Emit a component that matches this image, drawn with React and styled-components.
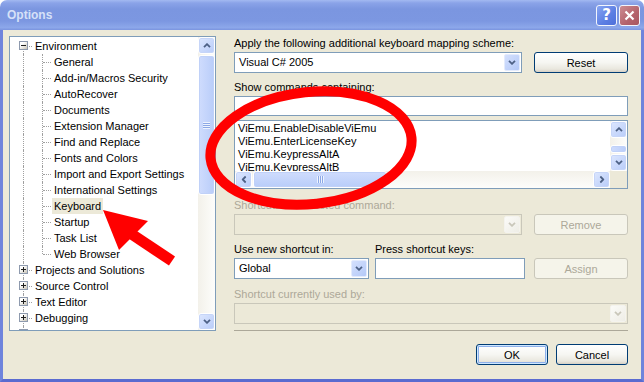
import React from 'react'
import styled, { createGlobalStyle } from 'styled-components'

const GlobalStyle = createGlobalStyle`
  html, body { margin: 0; padding: 0; background: #fff; overflow: hidden; }
  * { box-sizing: border-box; }
`

const Window = styled.div`
  position: relative;
  width: 644px;
  height: 382px;
  display: flex;
  flex-direction: column;
  font-family: "Liberation Sans", Arial, sans-serif;
  font-size: 11px;
  color: #000;
`

const TitleBar = styled.div`
  height: 30px;
  flex: none;
  display: flex;
  align-items: center;
  padding: 0 4px 0 7px;
  border-radius: 7px 7px 0 0;
  background: linear-gradient(#A3B9F1 0, #8AA3E8 10%, #7B96E0 30%, #7C97E1 70%, #8CA7EA 92%, #7A94DF 100%);
`

const Title = styled.div`
  flex: 1;
  color: #D6E1F8;
  font-weight: bold;
  font-size: 12px;
  padding-bottom: 1px;
`

const CaptionButton = styled.div`
  width: 21px;
  height: 21px;
  margin-left: 2px;
  border: 1px solid #F2F5FD;
  border-radius: 3px;
  display: flex;
  align-items: center;
  justify-content: center;
  color: #fff;
  font-family: "DejaVu Sans", sans-serif;
  font-size: 15px;
  font-weight: bold;
  background: ${p => p.$close
    ? 'linear-gradient(135deg, #CC8C92, #B4636C 60%, #A85761)'
    : 'linear-gradient(135deg, #87A5F2, #5B7EE3 60%, #4F70DA)'};
`

const Frame = styled.div`
  flex: 1;
  display: flex;
  flex-direction: column;
  background: #ECE9D8;
  border: 3px solid #6F84DC;
  border-top: 0;
  border-bottom-color: #5A6BD0;
  padding: 6px 13px 0 6px;
`

const Main = styled.div`
  display: flex;
  height: 295px;
`

/* ---------- tree ---------- */

const TreeBox = styled.div`
  width: 207px;
  height: 295px;
  flex: none;
  background: #fff;
  border: 1px solid #7F9DB9;
  display: flex;
`

const TreeList = styled.div`
  flex: 1;
  overflow: hidden;
  padding: 1px 0 0 4px;
`

const Row = styled.div`
  display: flex;
  height: 16px;
  align-items: center;
`

const Gutter = styled.div`
  position: relative;
  width: 19px;
  height: 16px;
  flex: none;

  &::before {
    content: '';
    display: ${p => (p.$up || p.$down ? 'block' : 'none')};
    position: absolute;
    left: 9px;
    top: ${p => (p.$up ? '0' : '8px')};
    bottom: ${p => (p.$down ? '0' : '8px')};
    border-left: 1px dotted #A0A0A0;
  }

  &::after {
    content: '';
    display: ${p => (p.$stub ? 'block' : 'none')};
    position: absolute;
    left: 10px;
    right: 1px;
    top: 8px;
    border-top: 1px dotted #A0A0A0;
  }
`

const Expander = styled.span`
  position: absolute;
  z-index: 1;
  left: 5px;
  top: 3px;
  width: 9px;
  height: 9px;
  border: 1px solid #8E9AAE;
  background: linear-gradient(135deg, #fff 30%, #C9C4B6);

  &::before {
    content: '';
    position: absolute;
    left: 1px;
    top: 3px;
    width: 5px;
    height: 1px;
    background: #1E1E1E;
  }

  &::after {
    content: '';
    display: ${p => (p.$plus ? 'block' : 'none')};
    position: absolute;
    left: 3px;
    top: 1px;
    width: 1px;
    height: 5px;
    background: #1E1E1E;
  }
`

const NodeLabel = styled.span`
  white-space: nowrap;
  line-height: 16px;
  padding: 0 2px;
  background: ${p => (p.$selected ? '#ECE9D8' : 'transparent')};
`

/* ---------- scrollbars ---------- */

const VScroll = styled.div`
  width: 17px;
  flex: none;
  display: flex;
  flex-direction: column;
  background: linear-gradient(to right, #F3F1EA, #FDFDFB);
`

const HScroll = styled.div`
  height: 17px;
  display: flex;
  background: linear-gradient(#F3F1EA, #FDFDFB);
`

const ScrollBtn = styled.div`
  width: 17px;
  height: 17px;
  flex: none;
  border: 1px solid #fff;
  border-radius: 3px;
  background: linear-gradient(135deg, #DDE7FE, #B8CCF9);
  box-shadow: inset 0 0 0 1px #C6D5F8;
  display: flex;
  align-items: center;
  justify-content: center;

  svg { transform: rotate(${p => p.$rot || 0}deg); }
`

const Track = styled.div`
  flex: 1;
  display: flex;
  flex-direction: ${p => (p.$horizontal ? 'row' : 'column')};
`

const Thumb = styled.div`
  flex: none;
  width: ${p => (p.$horizontal ? `${p.$size}px` : '100%')};
  height: ${p => (p.$horizontal ? '100%' : `${p.$size}px`)};
  margin: ${p => (p.$horizontal ? `0 0 0 ${p.$offset}px` : `${p.$offset}px 0 0`)};
  border: 1px solid #fff;
  border-radius: 3px;
  background: ${p => (p.$horizontal
    ? 'linear-gradient(#CFDCFD, #B9CDF9)'
    : 'linear-gradient(to right, #CFDCFD, #B9CDF9)')};
  box-shadow: inset 0 0 0 1px #C0D1F8;
  display: flex;
  align-items: center;
  justify-content: center;
`

const Grip = styled.div`
  width: 7px;
  height: 7px;
  background: ${p => (p.$horizontal
    ? 'repeating-linear-gradient(to right, #EEF4FE 0 1px, #8CA8E6 1px 2px)'
    : 'repeating-linear-gradient(#EEF4FE 0 1px, #8CA8E6 1px 2px)')};
`

const Chevron = ({ color = '#4D6185' }) => (
  <svg width="8" height="5" viewBox="0 0 8 5">
    <path d="M1 4.2 L4 1.2 L7 4.2" fill="none" stroke={color} strokeWidth="1.8" />
  </svg>
)

/* ---------- right pane ---------- */

const RightPane = styled.div`
  flex: 1;
  margin-left: 18px;
  display: flex;
  flex-direction: column;
  border-bottom: 1px solid #ACA899;
`

const Label = styled.div`
  line-height: 13px;
  height: 13px;
  margin-top: ${p => p.$top || 0}px;
  margin-bottom: 2px;
  white-space: nowrap;
  color: ${p => (p.$disabled ? '#ACA899' : '#000')};
`

const ControlRow = styled.div`
  display: flex;
  align-items: flex-end;
  gap: ${p => p.$gap || 12}px;
`

const Field = styled.div`
  display: flex;
  flex-direction: column;
  width: ${p => p.$width}px;
  flex: none;
`

const Combo = styled.div`
  height: 21px;
  flex: 1;
  border: 1px solid ${p => (p.$disabled ? '#C9C7BA' : '#7F9DB9')};
  background: ${p => (p.$disabled ? '#ECE9D8' : '#fff')};
  display: flex;
  align-items: stretch;
  padding: 1px;
`

const ComboText = styled.div`
  flex: 1;
  padding-left: 3px;
  line-height: 17px;
`

const DropBtn = styled.div`
  width: 16px;
  flex: none;
  border-radius: 2px;
  border: 1px solid ${p => (p.$disabled ? '#F4F3EE' : '#E3EBFD')};
  background: ${p => (p.$disabled
    ? 'linear-gradient(135deg, #FBFBF8, #EEEDE6)'
    : 'linear-gradient(135deg, #D4E0FD, #B4C9F8)')};
  display: flex;
  align-items: center;
  justify-content: center;

  svg { transform: rotate(180deg); }
`

const TextBox = styled.div`
  height: ${p => p.$height || 20}px;
  flex: none;
  border: 1px solid #7F9DB9;
  background: #fff;
`

const ListBox = styled.div`
  height: 69px;
  margin-top: 4px;
  border: 1px solid #7F9DB9;
  background: #fff;
  display: grid;
  grid-template-columns: 1fr 17px;
  grid-template-rows: 1fr 17px;
  overflow: hidden;
`

const ListItems = styled.div`
  padding: 1px 0 0 3px;
  overflow: hidden;
  line-height: 13px;
  white-space: nowrap;
`

const Corner = styled.div`
  background: #ECE9D8;
`

const Button = styled.div`
  width: ${p => p.$width || 94}px;
  height: 21px;
  flex: none;
  margin-left: ${p => (p.$push ? 'auto' : '0')};
  border: 1px solid ${p => (p.$disabled ? '#C9C7BA' : '#003C74')};
  border-radius: 3px;
  background: ${p => (p.$disabled
    ? '#F5F4EA'
    : 'linear-gradient(#FFFFFF 0, #F6F6F2 50%, #E9E7DE 85%, #D6D0C5 100%)')};
  color: ${p => (p.$disabled ? '#ACA899' : '#000')};
  box-shadow: ${p => (p.$default ? 'inset 0 0 0 1px #CEE7FF, inset 0 0 0 2px #8EB0EA' : 'none')};
  display: flex;
  align-items: center;
  justify-content: center;
`

const Footer = styled.div`
  display: flex;
  justify-content: flex-end;
  gap: 8px;
  padding-top: 13px;
`

const Annotation = styled.svg`
  position: absolute;
  left: 0;
  top: 0;
  pointer-events: none;
`

const envChildren = [
  'General', 'Add-in/Macros Security', 'AutoRecover', 'Documents', 'Extension Manager',
  'Find and Replace', 'Fonts and Colors', 'Import and Export Settings', 'International Settings',
  'Keyboard', 'Startup', 'Task List', 'Web Browser',
]
const otherRoots = ['Projects and Solutions', 'Source Control', 'Text Editor', 'Debugging', 'Device Tools']
const commands = ['ViEmu.EnableDisableViEmu', 'ViEmu.EnterLicenseKey', 'ViEmu.KeypressAltA', 'ViEmu.KeypressAltB']

const RootRow = ({ label, first, open }) => (
  <Row>
    <Gutter $up={!first} $down $stub>
      <Expander $plus={!open} />
    </Gutter>
    <NodeLabel>{label}</NodeLabel>
  </Row>
)

const ChildRow = ({ label, last, selected }) => (
  <Row>
    <Gutter $up $down />
    <Gutter $up $down={!last} $stub />
    <NodeLabel $selected={selected}>{label}</NodeLabel>
  </Row>
)

const App = () => {
  return (
    <Window>
      <GlobalStyle />
      <TitleBar>
        <Title>Options</Title>
        <CaptionButton>?</CaptionButton>
        <CaptionButton $close>
          <svg width="11" height="11" viewBox="0 0 11 11">
            <path d="M1.5 1.5 L9.5 9.5 M9.5 1.5 L1.5 9.5" stroke="#fff" strokeWidth="2.2" />
          </svg>
        </CaptionButton>
      </TitleBar>

      <Frame>
        <Main>
          <TreeBox>
            <TreeList>
              <RootRow label="Environment" first open />
              {envChildren.map((c, i) => (
                <ChildRow key={c} label={c} last={i === envChildren.length - 1} selected={c === 'Keyboard'} />
              ))}
              {otherRoots.map(r => <RootRow key={r} label={r} />)}
            </TreeList>
            <VScroll>
              <ScrollBtn><Chevron /></ScrollBtn>
              <Track>
                <Thumb $size={140} $offset={1}><Grip /></Thumb>
              </Track>
              <ScrollBtn $rot={180}><Chevron /></ScrollBtn>
            </VScroll>
          </TreeBox>

          <RightPane>
            <Label $top={1}>Apply the following additional keyboard mapping scheme:</Label>
            <ControlRow>
              <Combo>
                <ComboText>Visual C# 2005</ComboText>
                <DropBtn><Chevron /></DropBtn>
              </Combo>
              <Button>Reset</Button>
            </ControlRow>

            <Label $top={8}>Show commands containing:</Label>
            <TextBox />

            <ListBox>
              <ListItems>
                {commands.map(c => <div key={c}>{c}</div>)}
              </ListItems>
              <VScroll>
                <ScrollBtn><Chevron /></ScrollBtn>
                <Track>
                  <Thumb $size={8} $offset={7} />
                </Track>
                <ScrollBtn $rot={180}><Chevron /></ScrollBtn>
              </VScroll>
              <HScroll>
                <ScrollBtn $rot={-90}><Chevron /></ScrollBtn>
                <Track $horizontal>
                  <Thumb $horizontal $size={134} $offset={1}><Grip $horizontal /></Thumb>
                </Track>
                <ScrollBtn $rot={90}><Chevron /></ScrollBtn>
              </HScroll>
              <Corner />
            </ListBox>

            <Label $top={10} $disabled>Shortcuts for selected command:</Label>
            <ControlRow>
              <Combo $disabled>
                <ComboText />
                <DropBtn $disabled><Chevron color="#C9C7BA" /></DropBtn>
              </Combo>
              <Button $disabled>Remove</Button>
            </ControlRow>

            <ControlRow $gap={6}>
              <Field $width={135}>
                <Label $top={8}>Use new shortcut in:</Label>
                <Combo>
                  <ComboText>Global</ComboText>
                  <DropBtn><Chevron /></DropBtn>
                </Combo>
              </Field>
              <Field $width={150}>
                <Label $top={8}>Press shortcut keys:</Label>
                <TextBox $height={21} />
              </Field>
              <Button $disabled $push>Assign</Button>
            </ControlRow>

            <Label $top={9} $disabled>Shortcut currently used by:</Label>
            <ControlRow>
              <Combo $disabled>
                <ComboText />
                <DropBtn $disabled><Chevron color="#C9C7BA" /></DropBtn>
              </Combo>
            </ControlRow>
          </RightPane>
        </Main>

        <Footer>
          <Button $width={72} $default>OK</Button>
          <Button $width={72}>Cancel</Button>
        </Footer>
      </Frame>

      <Annotation width="644" height="382" viewBox="0 0 644 382">
        <ellipse cx="311" cy="148" rx="101" ry="56" fill="none" stroke="#F00" strokeWidth="10" transform="rotate(-6 311 148)" />
        <line x1="130" y1="233" x2="172" y2="261" stroke="#F00" strokeWidth="11" />
        <polygon points="103,210 148,221 119,250" fill="#F00" />
      </Annotation>
    </Window>
  )
}

export default App
